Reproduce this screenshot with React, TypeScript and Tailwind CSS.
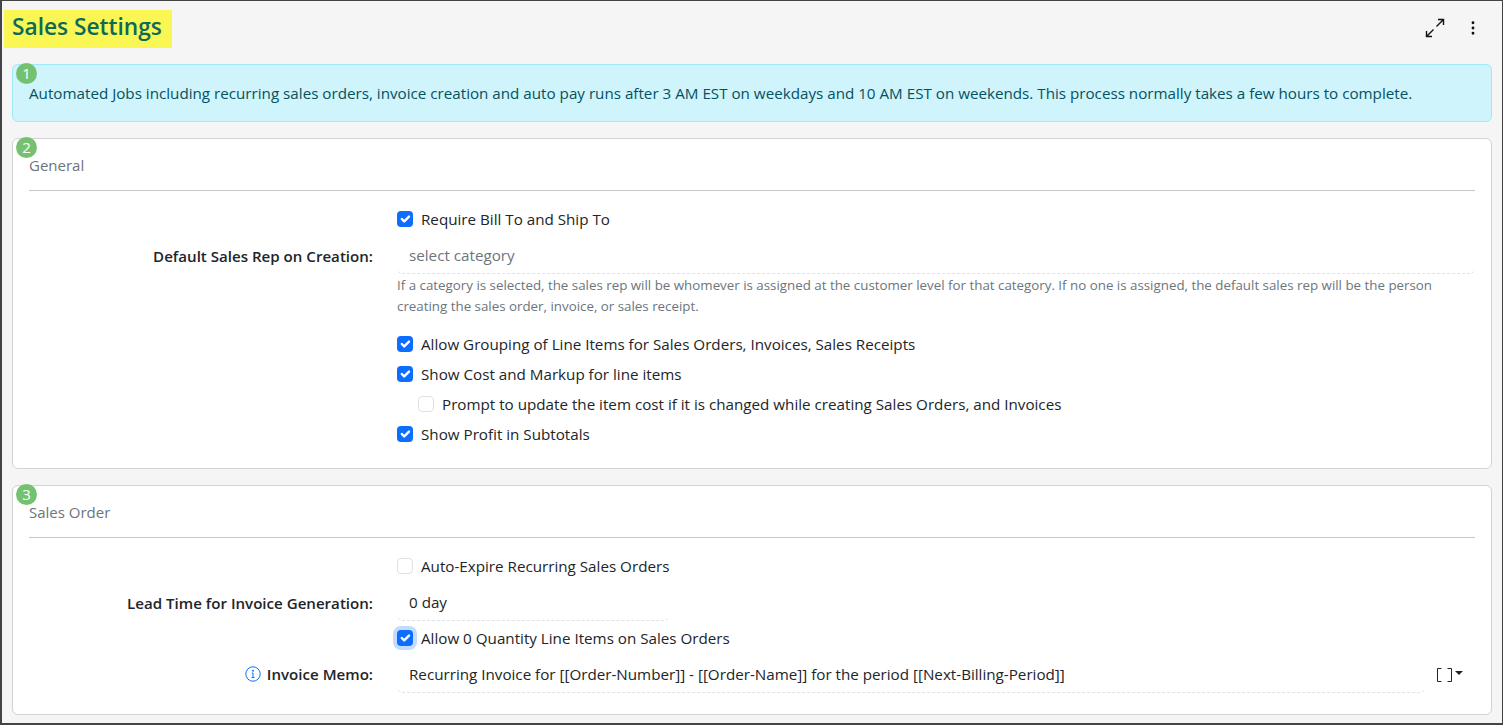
import { MoreVertical } from 'lucide-react';
import type { ReactNode } from 'react';

const font = { fontFamily: '"Open Sans", "Noto Sans", sans-serif' };

function Badge({ n }: { n: number }) {
  return (
    <span className="absolute left-[3px] top-[-2px] flex h-[21px] w-[21px] items-center justify-center rounded-full bg-[#74c16f] text-[15px] leading-none text-white">
      {n}
    </span>
  );
}

function Check({
  checked,
  focused,
  label,
}: {
  checked?: boolean;
  focused?: boolean;
  label: string;
}) {
  return (
    <label className="flex h-[30px] items-center gap-2 text-[15.2px] text-[#212529]">
      <span
        className={
          checked
            ? `flex h-4 w-4 items-center justify-center rounded-[4px] bg-[#0d6efd] ${focused ? 'shadow-[0_0_0_4px_#c2dbfe]' : ''}`
            : 'h-4 w-4 rounded-[4px] border border-[#dee2e6] bg-white'
        }
      >
        {checked && (
          <svg viewBox="0 0 20 20" className="h-4 w-4">
            <path
              d="m6 10 3 3 6-6"
              fill="none"
              stroke="#fff"
              strokeWidth="3"
              strokeLinecap="round"
              strokeLinejoin="round"
            />
          </svg>
        )}
      </span>
      {label}
    </label>
  );
}

function Row({ label, children }: { label?: ReactNode; children: ReactNode }) {
  return (
    <div className="flex">
      <div className="flex w-[344px] shrink-0 items-start justify-end pt-[11px] text-[15.1px] font-semibold text-[#212529]">
        {label}
      </div>
      <div className="ml-6 min-w-0 flex-1">{children}</div>
    </div>
  );
}

function Field({ text, muted, className }: { text: string; muted?: boolean; className?: string }) {
  return (
    <div
      className={`flex h-[40px] items-center rounded-b-md border-b border-dashed border-[#dee2e6] pl-3 pt-[4px] text-[15.2px] ${muted ? 'text-[#6c757d]' : 'text-[#212529]'} ${className ?? ''}`}
    >
      {text}
    </div>
  );
}

function Card({ n, title, className, children }: { n: number; title: string; className: string; children: ReactNode }) {
  return (
    <section className={`relative rounded-[6px] border border-[#d3d3d3] bg-white px-4 ${className}`}>
      <Badge n={n} />
      <h2 className="flex h-[52px] items-center border-b border-[#c8c8c8] pt-[1px] text-[15px] font-normal text-[#6c757d]">
        {title}
      </h2>
      {children}
    </section>
  );
}

export default function App() {
  return (
    <div
      style={font}
      className="h-[725px] w-[1503px] overflow-hidden border-t border-r border-b-2 border-l-2 border-[#444] bg-[#f5f5f5]"
    >
      <header className="flex h-[63px] items-start justify-between">
        <h1 className="ml-[2px] mt-[9px] flex h-[38px] w-[168px] items-center bg-[#faf653] pb-1 pl-2 text-[22.7px] font-semibold text-[#0d6a57]">
          Sales Settings
        </h1>
        <div className="mr-[20px] mt-[17px] flex items-center gap-[19px]">
          <svg viewBox="0 0 20 20" className="h-5 w-5" fill="none" stroke="#111" strokeWidth="1.4">
            <path d="M11.5 8.5 18.5 1.5M13 1.5h5.5V7M8.5 11.5l-7 7M1.5 13v5.5H7" />
          </svg>
          <MoreVertical className="h-[18px] w-[18px] text-[#111]" strokeWidth={1.8} />
        </div>
      </header>
      <div className="mx-[10px] flex flex-col">
        <div className="relative h-[58px] rounded-[6px] border border-[#9eeaf9] bg-[#cff4fc] pl-4 pt-[17px] text-[15.2px] leading-[22px] text-[#055160]">
          <Badge n={1} />
          Automated Jobs including recurring sales orders, invoice creation and auto pay runs after 3 AM EST on
          weekdays and 10 AM EST on weekends. This process normally takes a few hours to complete.
        </div>
        <Card n={2} title="General" className="mt-4 h-[331px]">
          <div className="pt-[13px]">
            <Row>
              <Check checked label="Require Bill To and Ship To" />
            </Row>
            <Row label="Default Sales Rep on Creation:">
              <Field text="select category" muted />
              <p className="mt-[1px] text-[13.33px] leading-[21px] text-[#6c757d]">
                If a category is selected, the sales rep will be whomever is assigned at the customer level for that
                category. If no one is assigned, the default sales rep will be the person creating the sales order,
                invoice, or sales receipt.
              </p>
              <div className="mt-[12px]">
                <Check checked label="Allow Grouping of Line Items for Sales Orders, Invoices, Sales Receipts" />
                <Check checked label="Show Cost and Markup for line items" />
                <div className="pl-[21px]">
                  <Check label="Prompt to update the item cost if it is changed while creating Sales Orders, and Invoices" />
                </div>
                <Check checked label="Show Profit in Subtotals" />
              </div>
            </Row>
          </div>
        </Card>
        <Card n={3} title="Sales Order" className="mt-[16px] h-[230px]">
          <div className="pt-[13px]">
            <Row>
              <Check label="Auto-Expire Recurring Sales Orders" />
            </Row>
            <Row label="Lead Time for Invoice Generation:">
              <Field text="0 day" className="w-[272px]" />
            </Row>
            <div className="mt-[2px]">
              <Row>
                <Check checked focused label="Allow 0 Quantity Line Items on Sales Orders" />
              </Row>
            </div>
            <Row
              label={
                <span className="-mt-px flex items-center gap-[6px]">
                  <svg viewBox="0 0 16 16" className="h-4 w-4" fill="none" stroke="#0d6efd">
                    <circle cx="8" cy="8" r="7.2" />
                    <path d="M8 7v4.5M6.5 11.5h3M6.8 7H8" />
                    <circle cx="8" cy="4.7" r=".6" fill="#0d6efd" />
                  </svg>
                  Invoice Memo:
                </span>
              }
            >
              <div className="flex">
                <Field
                  text="Recurring Invoice for [[Order-Number]] - [[Order-Name]] for the period [[Next-Billing-Period]]"
                  className="flex-1"
                />
                <div className="flex h-[40px] w-[50px] items-center justify-end gap-[3px] pr-[12px] pt-[3px] text-[#222]">
                  <svg viewBox="0 0 15 16" className="h-4 w-[15px]" fill="none" stroke="#222" strokeWidth="1">
                    <path d="M4.5 1.5H.5v13h4M10.5 1.5h4v13h-4" />
                  </svg>
                  <span className="mb-[3px] h-0 w-0 border-x-[4px] border-t-[4px] border-x-transparent border-t-[#222]" />
                </div>
              </div>
            </Row>
          </div>
        </Card>
      </div>
    </div>
  );
}
